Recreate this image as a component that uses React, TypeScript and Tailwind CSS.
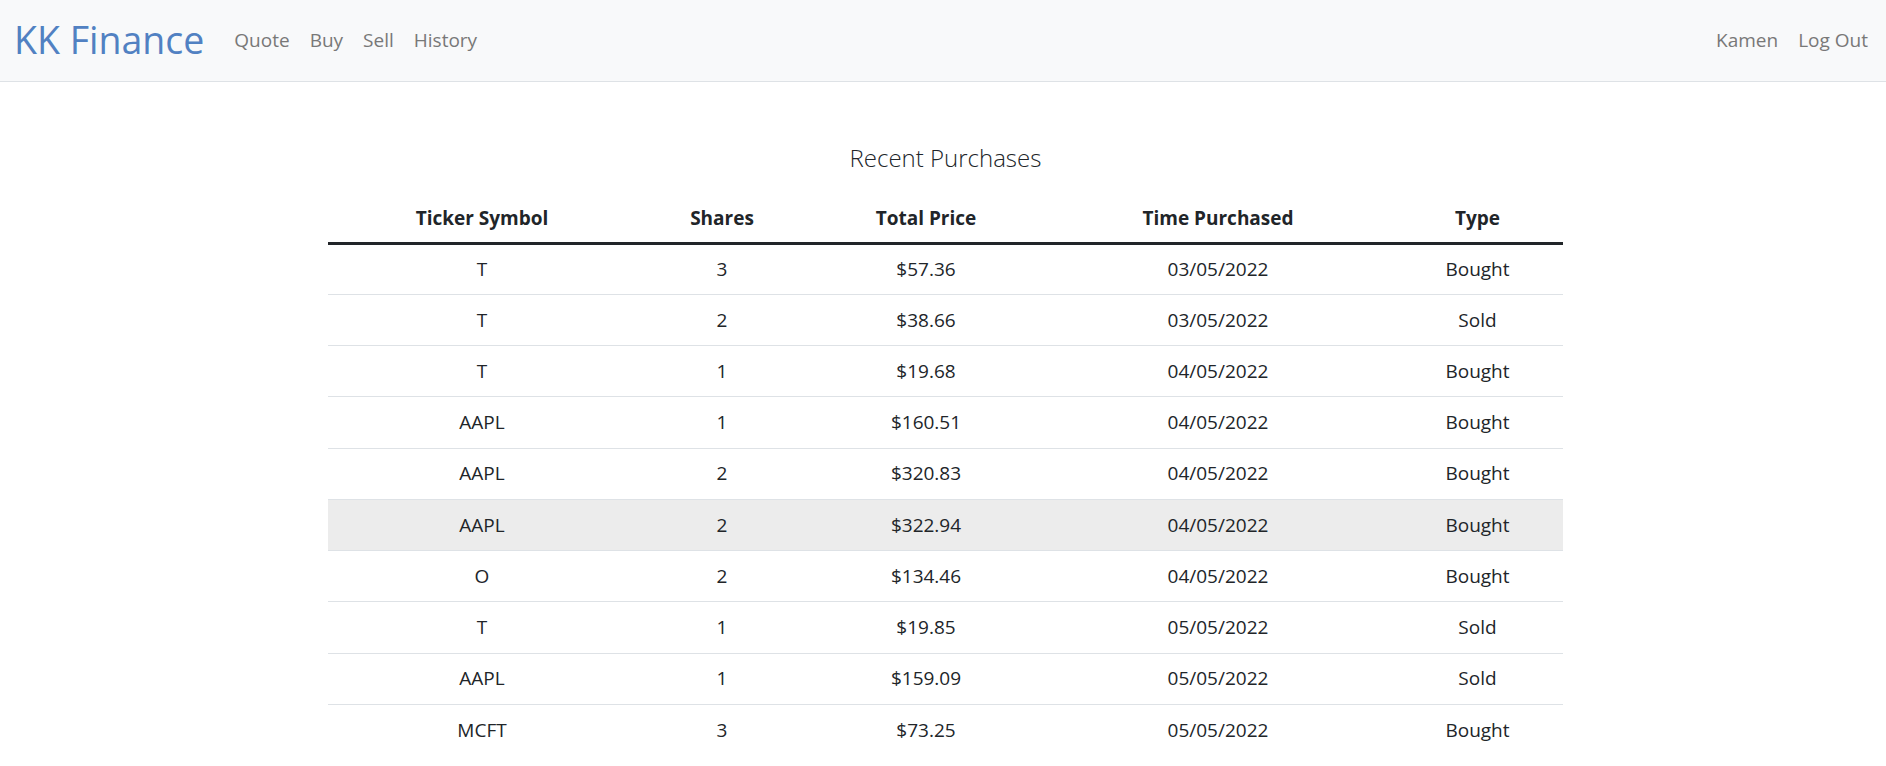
import React from "react";

const rows: [string, string, string, string, string][] = [
  ["T", "3", "$57.36", "03/05/2022", "Bought"],
  ["T", "2", "$38.66", "03/05/2022", "Sold"],
  ["T", "1", "$19.68", "04/05/2022", "Bought"],
  ["AAPL", "1", "$160.51", "04/05/2022", "Bought"],
  ["AAPL", "2", "$320.83", "04/05/2022", "Bought"],
  ["AAPL", "2", "$322.94", "04/05/2022", "Bought"],
  ["O", "2", "$134.46", "04/05/2022", "Bought"],
  ["T", "1", "$19.85", "05/05/2022", "Sold"],
  ["AAPL", "1", "$159.09", "05/05/2022", "Sold"],
  ["MCFT", "3", "$73.25", "05/05/2022", "Bought"],
];

export default function App() {
  return (
    <div className="min-h-screen bg-white text-[#212529] font-['Open_Sans',sans-serif]">
      <nav className="h-[82px] border-b border-[#dee2e6] bg-[#f8f9fa] flex items-center pl-[14px] pr-[8px]">
        <span className="text-[37.5px] leading-none text-[#5181c2] mr-[20px] pb-[2px]">KK Finance</span>
        <div className="flex items-center text-[19px] text-[#787878]">
          <span className="px-[10px]">Quote</span>
          <span className="px-[10px]">Buy</span>
          <span className="px-[10px]">Sell</span>
          <span className="px-[10px]">History</span>
        </div>
        <div className="ml-auto flex items-center text-[19px] text-[#787878]">
          <span className="px-[10px]">Kamen</span>
          <span className="px-[10px]">Log Out</span>
        </div>
      </nav>
      <div className="flex justify-center pl-[5px]">
        <div className="w-[1235px]">
          <h5 className="mt-[61px] mb-[22px] h-[30px] leading-[30px] text-center text-[24px] font-light text-[#212529]">
            Recent Purchases
          </h5>
          <table className="w-full table-fixed border-collapse text-[19px] text-center">
            <colgroup>
              <col className="w-[308px]" />
              <col className="w-[172px]" />
              <col className="w-[236px]" />
              <col className="w-[348px]" />
              <col className="w-[171px]" />
            </colgroup>
            <thead>
              <tr className="border-b-[3px] border-[#212529]">
                <th className="h-[48px] px-[10px] font-bold">Ticker Symbol</th>
                <th className="h-[48px] px-[10px] font-bold">Shares</th>
                <th className="h-[48px] px-[10px] font-bold">Total Price</th>
                <th className="h-[48px] px-[10px] font-bold">Time Purchased</th>
                <th className="h-[48px] px-[10px] font-bold">Type</th>
              </tr>
            </thead>
            <tbody>
              {rows.map((r, i) => (
                <tr
                  key={i}
                  className={
                    i === 5
                      ? "border-b border-[#dee2e6] bg-[#ececec]"
                      : i === rows.length - 1
                      ? ""
                      : "border-b border-[#dee2e6]"
                  }
                >
                  {r.map((c, j) => (
                    <td key={j} className="h-[51.25px] px-[10px] align-middle">
                      {c}
                    </td>
                  ))}
                </tr>
              ))}
            </tbody>
          </table>
        </div>
      </div>
    </div>
  );
}
